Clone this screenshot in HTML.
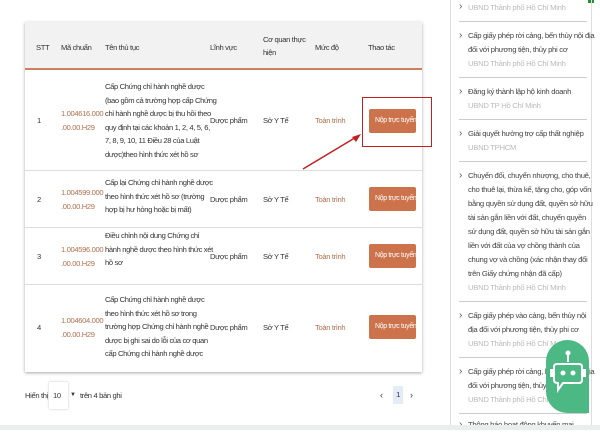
<!DOCTYPE html>
<html><head><meta charset="utf-8"><style>
*{margin:0;padding:0;box-sizing:border-box}
body{width:600px;height:430px;overflow:hidden;background:#fff;font-family:"Liberation Sans",sans-serif;font-size:7.6px;color:#333;position:relative;line-height:13.6px;letter-spacing:-0.35px}
.a{position:absolute;white-space:nowrap}
.card{left:25px;top:22px;width:397px;height:350px;background:#fff;box-shadow:0 1px 3px rgba(0,0,0,.35)}
.hdr{left:25px;top:22px;width:397px;height:48px;background:#f2f2f2;border-bottom:2px solid #c8825f}
.row{left:25px;width:397px;border-bottom:1px solid #ddd}
.code{color:#b0714f}
.toan{color:#b0714f}
.btn{position:absolute;left:369px;width:47px;height:24px;background:#cc734c;color:#fff;border-radius:2px;font-size:7px;line-height:24px;padding-left:6px;white-space:nowrap;overflow:hidden}
.rp{left:450px;top:0;width:142px;height:430px;border-left:1px solid #ddd;border-right:1px solid #ddd}
.it{position:absolute;left:459px;width:128px;border-bottom:1px solid #ccc;font-size:7.7px;line-height:14px;color:#444;padding-left:9px;padding-top:7px;letter-spacing:-0.3px;white-space:nowrap}
.it:before{content:"›";position:absolute;left:0;font-size:10px;color:#555}
.it span{color:#bbb;display:block}
</style></head><body>
<div class="a" style="left:588px;top:0;width:6px;height:3px;background:#2a8a3a"></div>
<div class="a card"></div>
<div class="a hdr"></div>
<div class="a" style="left:36px;top:41px">STT</div>
<div class="a" style="left:61px;top:41px">Mã chuẩn</div>
<div class="a" style="left:105px;top:41px">Tên thủ tục</div>
<div class="a" style="left:210px;top:41px">Lĩnh vực</div>
<div class="a" style="left:263px;top:33px;line-height:13px">Cơ quan thực<br>hiện</div>
<div class="a" style="left:315px;top:41px">Mức độ</div>
<div class="a" style="left:368px;top:41px">Thao tác</div>

<div class="a row" style="top:72px;height:99px"></div>
<div class="a" style="left:37px;top:114px">1</div>
<div class="a code" style="left:61px;top:107px">1.004616.000<br>.00.00.H29</div>
<div class="a" style="left:105px;top:80px">Cấp Chứng chỉ hành nghề dược<br>(bao gồm cả trường hợp cấp Chứng<br>chỉ hành nghề dược bị thu hồi theo<br>quy định tại các khoản 1, 2, 4, 5, 6,<br>7, 8, 9, 10, 11 Điều 28 của Luật<br>dược)theo hình thức xét hồ sơ</div>
<div class="a" style="left:210px;top:114px">Dược phẩm</div>
<div class="a" style="left:263px;top:114px">Sở Y Tế</div>
<div class="a toan" style="left:315px;top:114px">Toàn trình</div>
<div class="btn" style="top:109px">Nộp trực tuyến</div>
<div class="a" style="left:362px;top:97px;width:70px;height:50px;border:1.5px solid #c02020"></div>
<svg class="a" style="left:300px;top:130px" width="65" height="42"><line x1="3" y1="39" x2="58" y2="6" stroke="#c02020" stroke-width="1.5"/><polygon points="61,4 52,7 56,12" fill="#c02020"/></svg>

<div class="a row" style="top:171px;height:57px"></div>
<div class="a" style="left:37px;top:193px">2</div>
<div class="a code" style="left:61px;top:186px">1.004599.000<br>.00.00.H29</div>
<div class="a" style="left:105px;top:176px">Cấp lại Chứng chỉ hành nghề dược<br>theo hình thức xét hồ sơ (trường<br>hợp bị hư hỏng hoặc bị mất)</div>
<div class="a" style="left:210px;top:193px">Dược phẩm</div>
<div class="a" style="left:263px;top:193px">Sở Y Tế</div>
<div class="a toan" style="left:315px;top:193px">Toàn trình</div>
<div class="btn" style="top:187px">Nộp trực tuyến</div>

<div class="a row" style="top:228px;height:57px"></div>
<div class="a" style="left:37px;top:250px">3</div>
<div class="a code" style="left:61px;top:243px">1.004596.000<br>.00.00.H29</div>
<div class="a" style="left:105px;top:229px">Điều chỉnh nội dung Chứng chỉ<br>hành nghề dược theo hình thức xét<br>hồ sơ</div>
<div class="a" style="left:210px;top:250px">Dược phẩm</div>
<div class="a" style="left:263px;top:250px">Sở Y Tế</div>
<div class="a toan" style="left:315px;top:250px">Toàn trình</div>
<div class="btn" style="top:244px">Nộp trực tuyến</div>

<div class="a" style="left:37px;top:321px">4</div>
<div class="a code" style="left:61px;top:314px">1.004604.000<br>.00.00.H29</div>
<div class="a" style="left:105px;top:293px">Cấp Chứng chỉ hành nghề dược<br>theo hình thức xét hồ sơ trong<br>trường hợp Chứng chỉ hành nghề<br>dược bị ghi sai do lỗi của cơ quan<br>cấp Chứng chỉ hành nghề dược</div>
<div class="a" style="left:210px;top:321px">Dược phẩm</div>
<div class="a" style="left:263px;top:321px">Sở Y Tế</div>
<div class="a toan" style="left:315px;top:321px">Toàn trình</div>
<div class="btn" style="top:315px">Nộp trực tuyến</div>

<div class="a" style="left:25px;top:389px">Hiển thị</div>
<div class="a" style="left:49px;top:382px;width:19px;height:27px;box-shadow:0 0 2px rgba(0,0,0,.25);padding:7px 0 0 4px">10</div>
<div class="a" style="left:70px;top:389px;font-size:6px">▼</div>
<div class="a" style="left:80px;top:389px">trên 4 bản ghi</div>
<div class="a" style="left:380px;top:389px;font-size:9px">‹</div>
<div class="a" style="left:393px;top:386px;width:10px;height:18px;background:#e4ecf7;text-align:center;padding-top:2px">1</div>
<div class="a" style="left:410px;top:389px;font-size:9px">›</div>

<div class="a rp"></div>
<div class="it" style="top:0;height:22px;padding-top:0"><span style="position:absolute;top:1px">UBND Thành phố Hồ Chí Minh</span></div>
<div class="it" style="top:22px;height:56px">Cấp giấy phép rời cảng, bến thủy nội địa<br>đối với phương tiện, thủy phi cơ<span>UBND Thành phố Hồ Chí Minh</span></div>
<div class="it" style="top:78px;height:42px">Đăng ký thành lập hộ kinh doanh<span>UBND TP Hồ Chí Minh</span></div>
<div class="it" style="top:120px;height:42px">Giải quyết hưởng trợ cấp thất nghiệp<span>UBND TPHCM</span></div>
<div class="it" style="top:162px;height:140px">Chuyển đổi, chuyển nhượng, cho thuê,<br>cho thuê lại, thừa kế, tặng cho, góp vốn<br>bằng quyền sử dụng đất, quyền sở hữu<br>tài sản gắn liền với đất, chuyển quyền<br>sử dụng đất, quyền sở hữu tài sản gắn<br>liền với đất của vợ chồng thành của<br>chung vợ và chồng (xác nhận thay đổi<br>trên Giấy chứng nhận đã cấp)<span>UBND Thành phố Hồ Chí Minh</span></div>
<div class="it" style="top:302px;height:56px">Cấp giấy phép vào cảng, bến thủy nội<br>địa đối với phương tiện, thủy phi cơ<span>UBND Thành phố Hồ Chí Minh</span></div>
<div class="it" style="top:358px;height:56px">Cấp giấy phép rời cảng, bến thủy nội địa<br>đối với phương tiện, thủy phi cơ<span>UBND Thành phố Hồ Chí Minh</span></div>
<div class="it" style="top:414px;height:20px;border:none;padding-top:4px">Thông báo hoạt động khuyến mại</div>

<div class="a" style="left:546px;top:340px;width:43px;height:73px;background:#4cb883;border-radius:22px 22px 0 22px"></div>
<svg class="a" style="left:549px;top:350px" width="38" height="52" viewBox="0 0 38 52"><line x1="19" y1="3" x2="19" y2="12" stroke="#fff" stroke-width="2"/><circle cx="19" cy="3" r="2.5" fill="#fff"/><path d="M8 14 H30 Q33 14 33 17 V30 Q33 33 30 33 H14 L9 40 V33 Q5 33 5 30 V17 Q5 14 8 14Z" fill="none" stroke="#fff" stroke-width="2"/><circle cx="14" cy="23" r="2.5" fill="#fff"/><circle cx="24" cy="23" r="2.5" fill="#fff"/><rect x="1" y="19" width="3" height="8" fill="#fff"/><rect x="34" y="19" width="3" height="8" fill="#fff"/></svg>

<div class="a" style="left:0;top:425px;width:600px;height:5px;background:#e8efec"></div>
</body></html>
